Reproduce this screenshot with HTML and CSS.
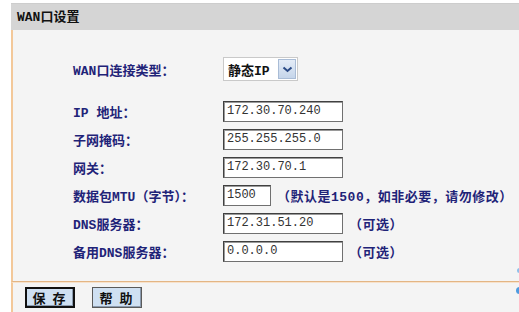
FILE: index.html
```html
<!DOCTYPE html>
<html lang="zh-CN">
<head>
    <meta charset="UTF-8">
    <title>WAN口设置</title>
    <link rel="stylesheet" href="styles.css">
</head>
<body>
    <div class="panel">
        <div class="title">WAN口设置</div>

        <div class="content">
            <div class="row row-type">
                <span class="label">WAN口连接类型：</span>
                <div class="fake-select">
                    <span class="fake-value">静态IP</span>
                    <span class="fake-arrow">
                        <svg width="11" height="7" viewBox="0 0 11 7"><polyline points="1.5,1.5 5.5,5 9.5,1.5" fill="none" stroke="#2b4a86" stroke-width="2"/></svg>
                    </span>
                </div>
            </div>

            <div class="row first">
                <span class="label">IP 地址：</span>
                <input class="field" type="text" value="172.30.70.240">
            </div>
            <div class="row">
                <span class="label">子网掩码：</span>
                <input class="field" type="text" value="255.255.255.0">
            </div>
            <div class="row">
                <span class="label">网关：</span>
                <input class="field" type="text" value="172.30.70.1">
            </div>
            <div class="row">
                <span class="label">数据包MTU（字节）：</span>
                <input class="field short" type="text" value="1500">
                <span class="hint">（默认是1500，如非必要，请勿修改）</span>
            </div>
            <div class="row">
                <span class="label">DNS服务器：</span>
                <input class="field" type="text" value="172.31.51.20">
                <span class="hint">（可选）</span>
            </div>
            <div class="row">
                <span class="label">备用DNS服务器：</span>
                <input class="field" type="text" value="0.0.0.0">
                <span class="hint">（可选）</span>
            </div>
        </div>

        <div class="foot">
            <button class="btn focused">保 存</button>
            <button class="btn">帮 助</button>
        </div>
    </div>

    <span class="dot dot-a"></span>
    <span class="dot dot-b"></span>
</body>
</html>
```

FILE: styles.css
```css
body {
    margin: 0;
    background-color: #ffffff;
    font-family: "Liberation Mono", "Noto Sans CJK TC", monospace;
    font-size: 13px;
    overflow: hidden;
}
.panel {
    margin: 3px 0 0 11px;
}
.title {
    height: 27px;
    line-height: 27px;
    padding-left: 6px;
    background-color: #d5d5d5;
    border-top: 1px solid #cdcdcd;
    box-sizing: border-box;
    color: #111;
    font-size: 13px;
    font-weight: bold;
}
.content {
    background-color: #f4f4f4;
    border-left: 2px solid #f3c899;
    border-bottom: 1px solid #e3b584;
    padding: 27px 0 16px 60px;
}
.row {
    display: flex;
    align-items: center;
    height: 28px;
}
.row-type {
    height: 24px;
    margin-bottom: 16px;
}
.label {
    width: 150px;
    flex-shrink: 0;
    color: #1f2378;
    font-weight: bold;
    font-size: 13px;
}
.fake-select {
    display: flex;
    align-items: center;
    width: 75px;
    height: 24px;
    box-sizing: border-box;
    border: 1px solid #c9c9c9;
    background-color: #fff;
    padding: 1px 1px 1px 4px;
}
.fake-value {
    flex: 1;
    color: #111;
    font-weight: bold;
}
.fake-arrow {
    display: flex;
    align-items: center;
    justify-content: center;
    width: 18px;
    height: 20px;
    box-sizing: border-box;
    border: 1px solid #a9bcd6;
    background: linear-gradient(#e4ecf7, #c5d5ea);
}
.field {
    width: 120px;
    height: 21px;
    box-sizing: border-box;
    margin: 0;
    padding: 0 3px;
    border: 1px solid #404040;
    border-right-color: #707070;
    border-bottom-color: #707070;
    box-shadow: inset 1px 1px 0 #9a9a9a;
    background-color: #fff;
    color: #333;
    font-family: "Liberation Mono", monospace;
    font-size: 12px;
}
.field.short {
    width: 48px;
}
.hint {
    margin-left: 6px;
    color: #1f2378;
    font-weight: bold;
    font-size: 13px;
    letter-spacing: 0.5px;
    white-space: nowrap;
}
.foot {
    background-color: #f4f4f4;
    border-left: 2px solid #f3c899;
    border-top: 1px solid #f7e2cc;
    padding: 4px 0 6px 12px;
    display: flex;
    gap: 17px;
}
.btn {
    width: 50px;
    height: 21px;
    padding: 0;
    box-sizing: border-box;
    border: 1px solid #5a5a5a;
    box-shadow: inset -1px -1px 0 #8a9aae;
    background-color: #cfe0f2;
    color: #111;
    font-family: "Noto Sans CJK SC", sans-serif;
    font-size: 13px;
    font-weight: bold;
    line-height: 18px;
    letter-spacing: 2px;
}
.btn.focused {
    border: 2px solid #111;
}
.dot {
    position: absolute;
    right: -4px;
    width: 7px;
    height: 7px;
    border-radius: 50%;
    background-color: #4d9be0;
}
.dot-a {
    top: 268px;
    width: 5px;
    height: 5px;
    right: -3px;
    background-color: #8fc0ea;
}
.dot-b {
    top: 287px;
}
```
